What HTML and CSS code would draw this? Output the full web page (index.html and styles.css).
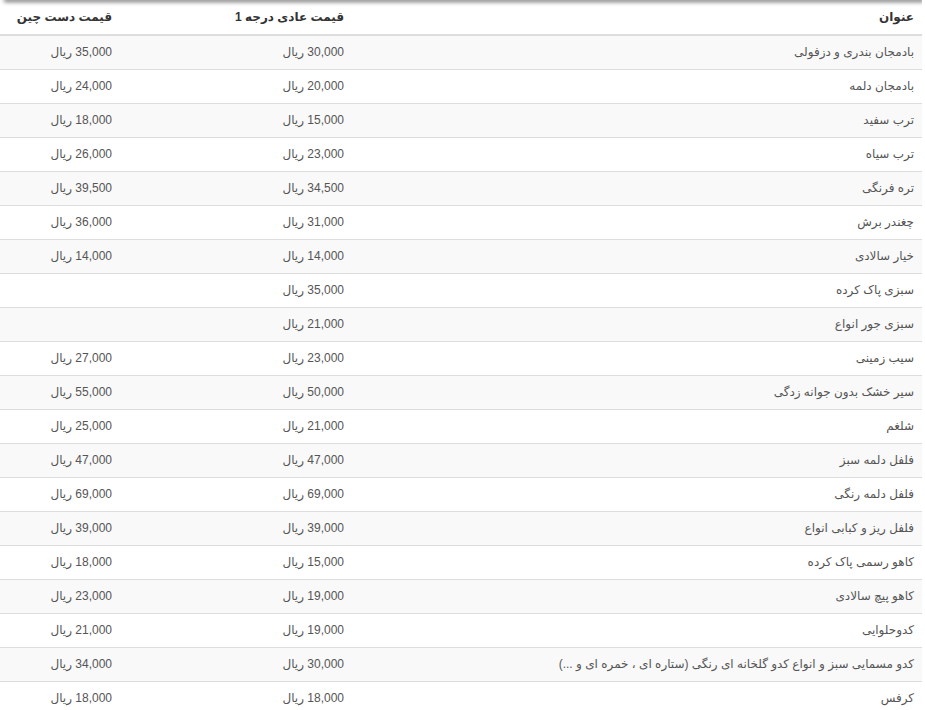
FILE: index.html
```html
<!DOCTYPE html>
<html lang="fa" dir="rtl">
<head>
<meta charset="utf-8">
<title>قیمت صیفی جات</title>
<link rel="stylesheet" href="styles.css">
</head>
<body>
<div class="page">
  <div class="shade"></div>
  <table class="price-table">
    <thead>
      <tr>
        <th class="col-title">عنوان</th>
        <th class="col-normal">قیمت عادی درجه 1</th>
        <th class="col-select">قیمت دست چین</th>
      </tr>
    </thead>
    <tbody>
      <tr><td>بادمجان بندری و دزفولی</td><td>30,000 ریال</td><td>35,000 ریال</td></tr>
      <tr><td>بادمجان دلمه</td><td>20,000 ریال</td><td>24,000 ریال</td></tr>
      <tr><td>ترب سفید</td><td>15,000 ریال</td><td>18,000 ریال</td></tr>
      <tr><td>ترب سیاه</td><td>23,000 ریال</td><td>26,000 ریال</td></tr>
      <tr><td>تره فرنگی</td><td>34,500 ریال</td><td>39,500 ریال</td></tr>
      <tr><td>چغندر برش</td><td>31,000 ریال</td><td>36,000 ریال</td></tr>
      <tr><td>خیار سالادی</td><td>14,000 ریال</td><td>14,000 ریال</td></tr>
      <tr><td>سبزی پاک کرده</td><td>35,000 ریال</td><td></td></tr>
      <tr><td>سبزی جور انواع</td><td>21,000 ریال</td><td></td></tr>
      <tr><td>سیب زمینی</td><td>23,000 ریال</td><td>27,000 ریال</td></tr>
      <tr><td>سیر خشک بدون جوانه زدگی</td><td>50,000 ریال</td><td>55,000 ریال</td></tr>
      <tr><td>شلغم</td><td>21,000 ریال</td><td>25,000 ریال</td></tr>
      <tr><td>فلفل دلمه سبز</td><td>47,000 ریال</td><td>47,000 ریال</td></tr>
      <tr><td>فلفل دلمه رنگی</td><td>69,000 ریال</td><td>69,000 ریال</td></tr>
      <tr><td>فلفل ریز و کبابی انواع</td><td>39,000 ریال</td><td>39,000 ریال</td></tr>
      <tr><td>کاهو رسمی پاک کرده</td><td>15,000 ریال</td><td>18,000 ریال</td></tr>
      <tr><td>کاهو پیچ سالادی</td><td>19,000 ریال</td><td>23,000 ریال</td></tr>
      <tr><td>کدوحلوایی</td><td>19,000 ریال</td><td>21,000 ریال</td></tr>
      <tr><td>کدو مسمایی سبز و انواع کدو گلخانه ای رنگی (ستاره ای ، خمره ای و ...)</td><td>30,000 ریال</td><td>34,000 ریال</td></tr>
      <tr><td>کرفس</td><td>18,000 ریال</td><td>18,000 ریال</td></tr>
    </tbody>
  </table>
</div>
</body>
</html>
```
FILE: styles.css
```css
html, body {
  margin: 0;
  padding: 0;
  background: #fff;
}
body {
  font-family: "Liberation Sans", "DejaVu Sans", Tahoma, sans-serif;
  font-size: 12px;
  color: #555;
}
.page {
  width: 922px;
  margin-right: auto;
  margin-left: 0;
  overflow: hidden;
}
.shade {
  height: 0;
  width: 916px;
  box-shadow: 0 0 4px 2px rgba(0, 0, 0, 0.55);
}
.price-table {
  width: 922px;
  border-collapse: separate;
  border-spacing: 0;
  direction: rtl;
}
.price-table th,
.price-table td {
  padding: 8px;
  line-height: 17px;
  text-align: right;
  vertical-align: middle;
}
.price-table th {
  padding-top: 9px;
  color: #333;
  font-weight: bold;
  border-bottom: 2px solid #ddd;
}
.price-table td {
  border-top: 1px solid #ddd;
}
.price-table tbody tr:first-child td {
  border-top: 0;
}
.price-table tbody tr:nth-child(odd) td {
  background: #f9f9f9;
}
.col-normal {
  width: 216px;
}
.col-select {
  width: 104px;
}
```
